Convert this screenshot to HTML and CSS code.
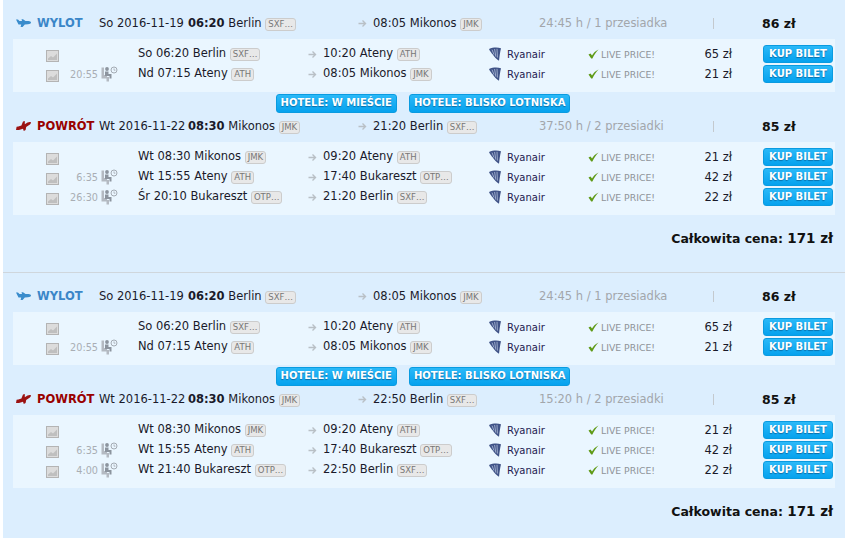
FILE: index.html
```html
<!DOCTYPE html>
<html lang="en">
  <head>
    <meta charset="UTF-8" />
    <title>Wyniki lotów</title>
    <link rel="stylesheet" href="styles.css">
  </head>
  <body>
    <svg class="defs" width="0" height="0">
      <symbol id="plane" viewBox="0 0 15 8"><path d="M0 0.5 2 0.5 3.5 2 6 2 5.5 0.3 7 0.3 9.5 2 12.5 2C14 2 15 2.8 15 3.6 15 4.6 13.6 5.2 12 5.3L8.8 5.5 6.6 8 4.6 8 5.2 5.5 2.5 5.5Z"/></symbol>
      <symbol id="land" viewBox="0 0 15 10"><path d="M0 9 0.6 5.8 2.4 5.4 5.4 4.6 7 0.6 8.8 0 8.8 3.2 11.5 1.6C13 0.8 14.4 0.8 15 1.4 15 2.4 14 3.4 12.8 4.2L10.2 6 9.6 9 7.8 10 7 7.8 3 9Z"/></symbol>
      <symbol id="thumb" viewBox="0 0 13 12"><rect width="13" height="12" fill="#b4b4b4"/><rect x="1" y="1" width="11" height="10" fill="#dcdcdc"/><path d="M2 8.5 5 6 7 7.5 11 3.5V10H2Z" fill="#bfbfbf"/></symbol>
      <symbol id="seat" viewBox="0 0 17 16"><path d="M0.5 1.5H3V9H6V11H8V15.5H5.5V12.5H0.5Z" fill="#b4bac2"/><circle cx="6" cy="3" r="1.9" fill="#8c949e"/><path d="M4 5.5H7.5V8H10.5V12.5H8.5V10H4Z" fill="#8c949e"/><circle cx="13" cy="4" r="3" fill="#eaf6ff" stroke="#a4abb3"/><path d="M13 2.4V4.2H14.4" fill="none" stroke="#a4abb3" stroke-width=".8"/></symbol>
      <symbol id="arrow" viewBox="0 0 9 9"><path d="M0.5 4.5H7.5M4.5 1.5 7.5 4.5 4.5 7.5" fill="none" stroke="#b9c0c6" stroke-width="1.4"/></symbol>
      <symbol id="harp" viewBox="0 0 12 14"><path d="M0 2C4 0.2 8.5 0.2 12 1.2 11 5 10.6 9.5 10 13.8 7.6 12.6 5.2 10 3.8 7.6 2.6 6 1 4.4 0 2Z" fill="#3f5286"/><path d="M3 2.6 5 7.6M5.6 2 6.8 9.6M8 1.8 8.4 10.6" fill="none" stroke="#c5d3e8" stroke-width=".7"/></symbol>
      <symbol id="check" viewBox="0 0 11 10"><path d="M0.5 5.5 2.5 4.5 4 6.6C5.5 4 7.5 1.8 10.5 0.5 8 3 6 6 4.4 9.5H3.2Z" fill="#5f9a16"/></symbol>
    </svg>

    <div class="result">
      <div class="leg-head">
        <svg class="leg-icon out"><use href="#plane"/></svg>
        <span class="leg-name out">WYLOT</span>
        <span class="when"><span class="date">So 2016-11-19</span><b>06:20</b> Berlin <span class="code">SXF…</span></span>
        <svg class="arrow"><use href="#arrow"/></svg>
        <span class="where">08:05 Mikonos <span class="code">JMK</span></span>
        <span class="duration">24:45 h / 1 przesiadka</span>
        <span class="sep"></span>
        <span class="leg-price">86 zł</span>
      </div>
      <div class="segments">
        <div class="segment">
          <svg class="thumb"><use href="#thumb"/></svg>
          <span class="layover"></span>
          <span></span>
          <span class="from">So 06:20 Berlin <span class="code">SXF…</span></span>
          <svg class="arrow"><use href="#arrow"/></svg>
          <span class="to">10:20 Ateny <span class="code">ATH</span></span>
          <svg class="harp"><use href="#harp"/></svg>
          <span class="carrier">Ryanair</span>
          <svg class="check"><use href="#check"/></svg>
          <span class="live">LIVE PRICE!</span>
          <span class="price">65 zł</span>
          <a class="btn">KUP BILET</a>
        </div>
        <div class="segment">
          <svg class="thumb"><use href="#thumb"/></svg>
          <span class="layover">20:55</span>
          <svg class="seat"><use href="#seat"/></svg>
          <span class="from">Nd 07:15 Ateny <span class="code">ATH</span></span>
          <svg class="arrow"><use href="#arrow"/></svg>
          <span class="to">08:05 Mikonos <span class="code">JMK</span></span>
          <svg class="harp"><use href="#harp"/></svg>
          <span class="carrier">Ryanair</span>
          <svg class="check"><use href="#check"/></svg>
          <span class="live">LIVE PRICE!</span>
          <span class="price">21 zł</span>
          <a class="btn">KUP BILET</a>
        </div>
      </div>
      <div class="hotels">
        <a class="btn">HOTELE: W MIEŚCIE</a>
        <a class="btn">HOTELE: BLISKO LOTNISKA</a>
      </div>
      <div class="leg-head back">
        <svg class="leg-icon ret"><use href="#land"/></svg>
        <span class="leg-name ret">POWRÓT</span>
        <span class="when"><span class="date">Wt 2016-11-22</span><b>08:30</b> Mikonos <span class="code">JMK</span></span>
        <svg class="arrow"><use href="#arrow"/></svg>
        <span class="where">21:20 Berlin <span class="code">SXF…</span></span>
        <span class="duration">37:50 h / 2 przesiadki</span>
        <span class="sep"></span>
        <span class="leg-price">85 zł</span>
      </div>
      <div class="segments">
        <div class="segment">
          <svg class="thumb"><use href="#thumb"/></svg>
          <span class="layover"></span>
          <span></span>
          <span class="from">Wt 08:30 Mikonos <span class="code">JMK</span></span>
          <svg class="arrow"><use href="#arrow"/></svg>
          <span class="to">09:20 Ateny <span class="code">ATH</span></span>
          <svg class="harp"><use href="#harp"/></svg>
          <span class="carrier">Ryanair</span>
          <svg class="check"><use href="#check"/></svg>
          <span class="live">LIVE PRICE!</span>
          <span class="price">21 zł</span>
          <a class="btn">KUP BILET</a>
        </div>
        <div class="segment">
          <svg class="thumb"><use href="#thumb"/></svg>
          <span class="layover">6:35</span>
          <svg class="seat"><use href="#seat"/></svg>
          <span class="from">Wt 15:55 Ateny <span class="code">ATH</span></span>
          <svg class="arrow"><use href="#arrow"/></svg>
          <span class="to">17:40 Bukareszt <span class="code">OTP…</span></span>
          <svg class="harp"><use href="#harp"/></svg>
          <span class="carrier">Ryanair</span>
          <svg class="check"><use href="#check"/></svg>
          <span class="live">LIVE PRICE!</span>
          <span class="price">42 zł</span>
          <a class="btn">KUP BILET</a>
        </div>
        <div class="segment">
          <svg class="thumb"><use href="#thumb"/></svg>
          <span class="layover">26:30</span>
          <svg class="seat"><use href="#seat"/></svg>
          <span class="from">Śr 20:10 Bukareszt <span class="code">OTP…</span></span>
          <svg class="arrow"><use href="#arrow"/></svg>
          <span class="to">21:20 Berlin <span class="code">SXF…</span></span>
          <svg class="harp"><use href="#harp"/></svg>
          <span class="carrier">Ryanair</span>
          <svg class="check"><use href="#check"/></svg>
          <span class="live">LIVE PRICE!</span>
          <span class="price">22 zł</span>
          <a class="btn">KUP BILET</a>
        </div>
      </div>
      <div class="total">Całkowita cena: <span class="sum">171 zł</span></div>
    </div>

    <div class="result">
      <div class="leg-head">
        <svg class="leg-icon out"><use href="#plane"/></svg>
        <span class="leg-name out">WYLOT</span>
        <span class="when"><span class="date">So 2016-11-19</span><b>06:20</b> Berlin <span class="code">SXF…</span></span>
        <svg class="arrow"><use href="#arrow"/></svg>
        <span class="where">08:05 Mikonos <span class="code">JMK</span></span>
        <span class="duration">24:45 h / 1 przesiadka</span>
        <span class="sep"></span>
        <span class="leg-price">86 zł</span>
      </div>
      <div class="segments">
        <div class="segment">
          <svg class="thumb"><use href="#thumb"/></svg>
          <span class="layover"></span>
          <span></span>
          <span class="from">So 06:20 Berlin <span class="code">SXF…</span></span>
          <svg class="arrow"><use href="#arrow"/></svg>
          <span class="to">10:20 Ateny <span class="code">ATH</span></span>
          <svg class="harp"><use href="#harp"/></svg>
          <span class="carrier">Ryanair</span>
          <svg class="check"><use href="#check"/></svg>
          <span class="live">LIVE PRICE!</span>
          <span class="price">65 zł</span>
          <a class="btn">KUP BILET</a>
        </div>
        <div class="segment">
          <svg class="thumb"><use href="#thumb"/></svg>
          <span class="layover">20:55</span>
          <svg class="seat"><use href="#seat"/></svg>
          <span class="from">Nd 07:15 Ateny <span class="code">ATH</span></span>
          <svg class="arrow"><use href="#arrow"/></svg>
          <span class="to">08:05 Mikonos <span class="code">JMK</span></span>
          <svg class="harp"><use href="#harp"/></svg>
          <span class="carrier">Ryanair</span>
          <svg class="check"><use href="#check"/></svg>
          <span class="live">LIVE PRICE!</span>
          <span class="price">21 zł</span>
          <a class="btn">KUP BILET</a>
        </div>
      </div>
      <div class="hotels">
        <a class="btn">HOTELE: W MIEŚCIE</a>
        <a class="btn">HOTELE: BLISKO LOTNISKA</a>
      </div>
      <div class="leg-head back">
        <svg class="leg-icon ret"><use href="#land"/></svg>
        <span class="leg-name ret">POWRÓT</span>
        <span class="when"><span class="date">Wt 2016-11-22</span><b>08:30</b> Mikonos <span class="code">JMK</span></span>
        <svg class="arrow"><use href="#arrow"/></svg>
        <span class="where">22:50 Berlin <span class="code">SXF…</span></span>
        <span class="duration">15:20 h / 2 przesiadki</span>
        <span class="sep"></span>
        <span class="leg-price">85 zł</span>
      </div>
      <div class="segments">
        <div class="segment">
          <svg class="thumb"><use href="#thumb"/></svg>
          <span class="layover"></span>
          <span></span>
          <span class="from">Wt 08:30 Mikonos <span class="code">JMK</span></span>
          <svg class="arrow"><use href="#arrow"/></svg>
          <span class="to">09:20 Ateny <span class="code">ATH</span></span>
          <svg class="harp"><use href="#harp"/></svg>
          <span class="carrier">Ryanair</span>
          <svg class="check"><use href="#check"/></svg>
          <span class="live">LIVE PRICE!</span>
          <span class="price">21 zł</span>
          <a class="btn">KUP BILET</a>
        </div>
        <div class="segment">
          <svg class="thumb"><use href="#thumb"/></svg>
          <span class="layover">6:35</span>
          <svg class="seat"><use href="#seat"/></svg>
          <span class="from">Wt 15:55 Ateny <span class="code">ATH</span></span>
          <svg class="arrow"><use href="#arrow"/></svg>
          <span class="to">17:40 Bukareszt <span class="code">OTP…</span></span>
          <svg class="harp"><use href="#harp"/></svg>
          <span class="carrier">Ryanair</span>
          <svg class="check"><use href="#check"/></svg>
          <span class="live">LIVE PRICE!</span>
          <span class="price">42 zł</span>
          <a class="btn">KUP BILET</a>
        </div>
        <div class="segment">
          <svg class="thumb"><use href="#thumb"/></svg>
          <span class="layover">4:00</span>
          <svg class="seat"><use href="#seat"/></svg>
          <span class="from">Wt 21:40 Bukareszt <span class="code">OTP…</span></span>
          <svg class="arrow"><use href="#arrow"/></svg>
          <span class="to">22:50 Berlin <span class="code">SXF…</span></span>
          <svg class="harp"><use href="#harp"/></svg>
          <span class="carrier">Ryanair</span>
          <svg class="check"><use href="#check"/></svg>
          <span class="live">LIVE PRICE!</span>
          <span class="price">22 zł</span>
          <a class="btn">KUP BILET</a>
        </div>
      </div>
      <div class="total">Całkowita cena: <span class="sum">171 zł</span></div>
    </div>
  </body>
</html>
```

FILE: styles.css
```css
body {
  margin: 0 0 0 3px;
  height: 538px;
  overflow: hidden;
  background-color: #dceefe;
  box-shadow: -3px 0 0 #fff;
  font-family: "DejaVu Sans", sans-serif;
  font-size: 11.5px;
  color: #1a1a2a;
}
.defs {
  display: block;
  position: absolute;
}
.result {
  height: 258px;
  padding: 14px 10px 0;
  border-bottom: 1px solid #cfd6dc;
}
.result:last-child {
  border-bottom: none;
}
.leg-head {
  display: grid;
  grid-template-columns: 21px 62px 259px 15px 166px 174px 49px 1fr;
  align-items: center;
  height: 18px;
  padding-left: 3px;
  margin-bottom: 7px;
  white-space: nowrap;
}
.leg-icon {
  width: 15px;
  height: 10px;
}
.leg-icon.out {
  fill: #3a8ccc;
}
.leg-icon.ret {
  fill: #9b1212;
}
.leg-name {
  font-weight: bold;
}
.leg-name.out {
  color: #3a86c8;
}
.leg-name.ret {
  color: #900;
}
.date {
  display: inline-block;
  width: 89px;
}
.code {
  display: inline-block;
  padding: 0 2px;
  font-size: 8.5px;
  line-height: 11px;
  color: #777;
  background-color: #e8e8e8;
  border: 1px solid #ccc;
  border-radius: 3px;
}
.arrow {
  width: 9px;
  height: 9px;
}
.duration {
  color: #a2a6ab;
}
.sep {
  width: 1px;
  height: 11px;
  background-color: #c4c9ce;
}
.leg-price {
  font-weight: bold;
  font-size: 12.5px;
  color: #111;
}
.segments {
  padding: 5px 0 8px;
  background-color: #eaf6ff;
}
.segment {
  display: grid;
  grid-template-columns: 17px 35px 40px 170px 15px 166px 18px 81px 13px 99px 32px 70px;
  align-items: center;
  height: 20px;
  padding-left: 33px;
  white-space: nowrap;
}
.from,
.to {
  margin-bottom: 2px;
}
.thumb {
  width: 13px;
  height: 12px;
  margin-top: 4px;
}
.layover {
  text-align: right;
  font-size: 9.7px;
  color: #a9aeb4;
}
.seat {
  width: 17px;
  height: 16px;
  margin-left: 3px;
}
.harp {
  width: 12px;
  height: 14px;
}
.carrier {
  font-size: 10px;
  color: #23204f;
}
.check {
  width: 11px;
  height: 10px;
}
.live {
  font-size: 9.3px;
  color: #8e9398;
}
.price {
  text-align: right;
}
.btn {
  display: block;
  height: 18px;
  margin-left: 31px;
  box-sizing: border-box;
  border: 1px solid #0a9be0;
  border-radius: 3px;
  background: linear-gradient(#2bb9f8, #06a2ee);
  color: #fff;
  font-size: 10px;
  font-weight: bold;
  line-height: 16px;
  text-align: center;
  text-shadow: 0 1px 1px #0a6ea8;
  white-space: nowrap;
}
.segment .btn {
  width: 70px;
}
.hotels {
  display: flex;
  justify-content: center;
  gap: 12px;
  height: 19px;
  margin: 2px 0 4px;
  padding-right: 2px;
}
.hotels .btn {
  height: 19px;
  margin: 0;
  padding: 0 4px;
}
.total {
  margin-top: 15px;
  padding-right: 2px;
  text-align: right;
  font-size: 12.5px;
  font-weight: bold;
  color: #111;
}
.sum {
  font-size: 13.5px;
}
```
